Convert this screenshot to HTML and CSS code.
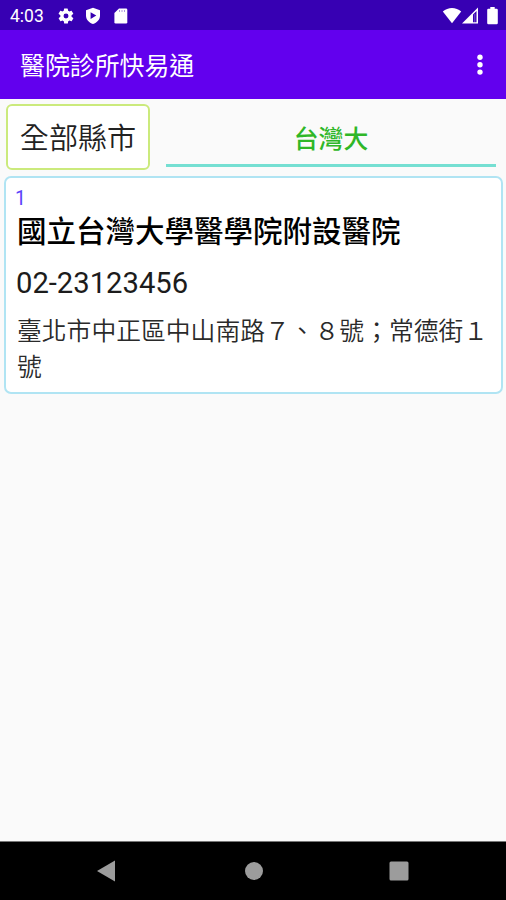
FILE: index.html
```html
<!DOCTYPE html>
<html lang="zh-Hant">
<head>
<meta charset="utf-8">
<title>醫院診所快易通</title>
<link rel="stylesheet" href="styles.css">
</head>
<body>
<div class="statusbar">
  <span class="clock">4:03</span>
  <svg class="gear" width="18" height="18" viewBox="0 0 24 24"><path fill="#fff" fill-rule="evenodd" d="M19.4 13a7.500 7.500 0 0 0 0-2l2.100-1.600c.2-.2.300-.4.100-.7l-2-3.400c-.1-.2-.4-.3-.6-.2l-2.500 1a7.300 7.300 0 0 0-1.700-1l-.4-2.600a.5.5 0 0 0-.5-.5h-4a.5.5 0 0 0-.5.4L9 5.100a7.700 7.700 0 0 0-1.700 1l-2.500-1c-.2-.1-.5 0-.6.2l-2 3.400c-.1.2-.1.500.1.700L4.500 11a7.900 7.900 0 0 0 0 2l-2.100 1.600c-.2.200-.3.400-.1.700l2 3.400c.1.200.4.300.6.200l2.500-1c.5.400 1.100.7 1.700 1l.4 2.600c0 .300.200.500.5.500h4c.2 0 .500-.2.500-.4l.4-2.700c.6-.2 1.200-.6 1.700-1l2.500 1c.2.100.500 0 .600-.2l2-3.400c.1-.2.100-.5-.1-.7zM12 15.300a3.300 3.300 0 1 1 0-6.600 3.300 3.300 0 0 1 0 6.600z"/></svg>
  <svg class="shield" width="16" height="18" viewBox="0 0 16 18"><path fill="#fff" fill-rule="evenodd" d="M8 .7 15 3.300v5.500c0 3.700-3 6.900-7 8.200-4-1.300-7-4.500-7-8.200V3.300zM5.600 5.200v6.800l5.700-3.400z"/></svg>
  <svg class="sdcard" width="14" height="16" viewBox="0 0 14 16"><path fill="#fff" d="M5 .5h7Q13.300.5 13.300 1.800v12.400Q13.300 15.500 12 15.500H1.700Q.4 15.500.4 14.200V5z"/><path stroke="#3700b3" stroke-width="1" d="M5.500 2v2M8 2v2M10.500 2v2" opacity=".4"/></svg>
  <span class="spacer"></span>
  <svg class="wifi" width="20" height="17" viewBox="0 0 20 17"><path fill="#fff" d="M.8 4.500C6-.2 14-.2 19.200 4.500L10 16.200z"/></svg>
  <svg class="signal" width="17" height="17" viewBox="0 0 17 17"><path fill="#fff" fill-rule="evenodd" d="M0 16.500 16 .5v16zM11 7.500v7.800h3.500V4z"/><path fill="#fff" d="M12.200 7h1.100v8.500h-1.100z" opacity=".3"/></svg>
  <svg class="battery" width="11" height="18" viewBox="0 0 11 18"><path fill="#fff" d="M3.300 0h4.400v1.800h1.900q1.200 0 1.200 1.200v13q0 1.200-1.200 1.200H1.400Q.2 17.200.2 16V3q0-1.200 1.200-1.200h1.900z"/></svg>
</div>
<header class="appbar">
  <h1>醫院診所快易通</h1>
  <svg width="6" height="22" viewBox="0 0 6 22" fill="#fff"><circle cx="3" cy="3.300" r="2.700"/><circle cx="3" cy="10.700" r="2.700"/><circle cx="3" cy="18.100" r="2.700"/></svg>
</header>
<main>
  <div class="filters">
    <div class="city">全部縣市</div>
    <div class="search">台灣大</div>
  </div>
  <article class="card">
    <div class="index">1</div>
    <h2>國立台灣大學醫學院附設醫院</h2>
    <div class="phone">02-23123456</div>
    <div class="address">臺北市中正區中山南路７、８號；常德街１號</div>
  </article>
</main>
<nav class="navbar">
  <svg width="18" height="22" viewBox="0 0 18 22"><path fill="#9c9c9c" d="M0 11 18 .5v21z"/></svg>
  <svg class="home" width="18" height="18" viewBox="0 0 18 18"><circle cx="9" cy="9" r="9" fill="#9c9c9c"/></svg>
  <svg width="20" height="20" viewBox="0 0 20 20"><rect x=".5" y=".5" width="19" height="19" rx="1.500" fill="#9c9c9c"/></svg>
</nav>
</body>
</html>
```
FILE: styles.css
```css
* { box-sizing: border-box; }
body {
  margin: 0;
  height: 900px;
  display: flex;
  flex-direction: column;
  overflow: hidden;
  background: #fafafa;
  color: #000;
  font-family: Roboto, "Noto Sans CJK TC", sans-serif;
}
svg { display: block; flex: none; }
h1, h2 { margin: 0; }
.statusbar {
  height: 30px;
  flex: none;
  display: flex;
  align-items: center;
  padding: 1px 8px 0 10px;
  background: #3700b3;
  color: #fff;
}
.clock { width: 47px; font-size: 17.5px; line-height: 30px; }
.shield { margin-left: 10px; }
.sdcard { margin-left: 13px; }
.spacer { flex: 1; }
.battery { margin-left: 8px; }
.appbar {
  height: 69px;
  flex: none;
  display: flex;
  align-items: center;
  justify-content: space-between;
  padding: 0 23px 0 20px;
  background: #6200ee;
  color: #fff;
}
.appbar h1 { padding-top: 5px; font-size: 24.9px; font-weight: 400; line-height: 36px; }
main { flex: 1; padding: 5px 3px 0 4px; }
.filters { display: flex; height: 66px; padding: 0 7px 0 2px; }
.city {
  width: 144px;
  height: 66px;
  border: 2px solid #cbea7c;
  border-radius: 6px;
  background: #fff;
  color: #222;
  font-size: 29.1px;
  font-weight: 350;
  line-height: 67px;
  text-align: center;
}
.search {
  flex: 1;
  height: 63px;
  margin-left: 16px;
  border-bottom: 3px solid #75dfd2;
  color: #2fb728;
  font-size: 24.8px;
  font-weight: 500;
  line-height: 72px;
  text-align: center;
}
.card {
  height: 218px;
  margin-top: 6px;
  padding: 11px 10px 0 11px;
  border: 2px solid #b0e4f3;
  border-radius: 7px;
  background: #fff;
}
.index { margin-left: -2px; color: #5a43fa; font-size: 19.5px; line-height: 20px; }
.card h2 { font-size: 29.5px; font-weight: 500; line-height: 46px; }
.phone { margin-top: 8px; margin-left: -1px; color: #1c1c1c; font-size: 29.2px; line-height: 40px; }
.address { margin-top: 11px; color: #2a2a2a; font-size: 24.8px; font-weight: 350; line-height: 36px; }
.navbar {
  height: 59px;
  flex: none;
  display: flex;
  align-items: center;
  justify-content: space-between;
  padding: 0 97px;
  border-top: 1px solid #777;
  background: #000;
}
.home { margin-left: 3px; }
```
